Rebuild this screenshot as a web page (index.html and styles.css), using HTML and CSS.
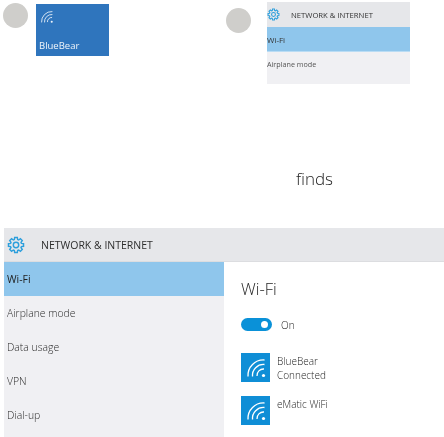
FILE: index.html
```html
<!DOCTYPE html>
<html lang="en">
<head>
<meta charset="utf-8">
<title>Network &amp; Internet</title>
<link rel="stylesheet" href="styles.css">
</head>
<body>
<svg class="defs" width="0" height="0" aria-hidden="true">
  <symbol id="gear" viewBox="0 0 20 20">
    <polygon fill="none" stroke="currentColor" stroke-width="1.6" points="16.02,8.16 18.37,8.52 18.37,11.48 16.02,11.84 15.56,12.96 16.96,14.88 14.88,16.96 12.96,15.56 11.84,16.02 11.48,18.37 8.52,18.37 8.16,16.02 7.04,15.56 5.12,16.96 3.04,14.88 4.44,12.96 3.98,11.84 1.63,11.48 1.63,8.52 3.98,8.16 4.44,7.04 3.04,5.12 5.12,3.04 7.04,4.44 8.16,3.98 8.52,1.63 11.48,1.63 11.84,3.98 12.96,4.44 14.88,3.04 16.96,5.12 15.56,7.04"/>
    <circle cx="10" cy="10" r="3" fill="none" stroke="currentColor" stroke-width="1.6"/>
  </symbol>
  <symbol id="wifi" viewBox="0 0 29 29">
    <g fill="none" stroke="currentColor" stroke-width="1.3">
      <path d="M7 23.5A15.5 15.5 0 0 1 23.5 7"/>
      <path d="M11.500 23.5A11 11 0 0 1 23.5 11.500"/>
      <path d="M16 23A6.5 6.5 0 0 1 23 16"/>
    </g>
    <circle cx="22.5" cy="22.5" r="1.6" fill="currentColor"/>
  </symbol>
</svg>
<div class="top">
  <div class="demo demo-tile">
    <div class="circle"></div>
    <div class="tile">
      <svg class="tile-wifi"><use href="#wifi"/></svg>
      <span class="tile-label">BlueBear</span>
    </div>
  </div>
  <div class="demo demo-menu">
    <div class="circle"></div>
    <div class="mini">
      <div class="mini-head">
        <svg class="mini-gear"><use href="#gear"/></svg>
        <span>NETWORK &amp; INTERNET</span>
      </div>
      <div class="mini-row mini-active">Wi-Fi</div>
      <div class="mini-row">Airplane mode</div>
    </div>
  </div>
</div>
<p class="caption">finds</p>
<section class="settings">
  <header class="head">
    <svg class="gear"><use href="#gear"/></svg>
    <span>NETWORK &amp; INTERNET</span>
  </header>
  <div class="body">
    <nav class="side">
      <div class="row active">Wi-Fi</div>
      <div class="row">Airplane mode</div>
      <div class="row">Data usage</div>
      <div class="row">VPN</div>
      <div class="row">Dial-up</div>
    </nav>
    <main class="pane">
      <h1 class="title">Wi-Fi</h1>
      <div class="switch-line">
        <span class="switch"><span class="knob"></span></span>
        <span>On</span>
      </div>
      <div class="net">
        <span class="net-icon"><svg><use href="#wifi"/></svg></span>
        <span class="net-text">BlueBear<br>Connected</span>
      </div>
      <div class="net">
        <span class="net-icon"><svg><use href="#wifi"/></svg></span>
        <span class="net-text">eMatic WiFi</span>
      </div>
    </main>
  </div>
</section>
</body>
</html>
```

FILE: styles.css
```css
* { box-sizing: border-box; }
html, body { margin: 0; padding: 0; }
body {
  width: 444px;
  height: 437px;
  overflow: hidden;
  background: #fff;
  color: #333;
  font-family: "Open Sans", "Noto Sans", sans-serif;
  font-weight: 400;
  filter: blur(0.25px);
}
.defs { display: block; height: 0; }
.top { display: flex; height: 84px; }
.demo { display: flex; align-items: flex-start; }
.circle { width: 25px; height: 25px; border-radius: 50%; background: #cfcecb; }
.demo-tile { width: 226px; padding-left: 3px; padding-top: 3px; }
.tile {
  width: 73px;
  height: 52px;
  margin: 1px 0 0 8px;
  padding: 3px 3px 5px;
  background: #2f75bd;
  color: #f0f5fa;
  display: flex;
  flex-direction: column;
  justify-content: space-between;
}
.tile-wifi { width: 19px; height: 19px; margin-left: -2px; color: #eef4fa; }
.tile-label { font-size: 9.5px; line-height: 10px; }
.demo-menu { padding-top: 2px; }
.demo-menu .circle { margin-top: 6px; }
.mini { width: 143px; height: 82px; margin-left: 16px; background: #f0f0f3; font-size: 7.2px; }
.mini-head {
  height: 25px;
  background: #e6e7ea;
  display: flex;
  align-items: center;
  gap: 11px;
  font-size: 7.7px;
  color: #333;
}
.mini-gear { width: 13px; height: 13px; color: #2d9fdc; }
.mini-row { height: 25px; line-height: 25px; color: #555; }
.mini-active { background: #8fc6ec; border-bottom: 1px solid #b9dcf4; color: #333; font-size: 8px; }
.caption { margin: 0; width: 444px; height: 144px; padding: 85px 0 0 185px; font-size: 17px; font-weight: 300; line-height: 20px; text-align: center; color: #222; }
.settings { margin-left: 4px; height: 209px; }
.head {
  height: 34px;
  background: #e6e7ea;
  border-bottom: 1px solid #dcdde0;
  display: flex;
  align-items: center;
  gap: 16px;
  padding-left: 3px;
  font-size: 10.5px;
  color: #2e2e2e;
}
.gear { width: 18px; height: 18px; color: #2d9fdc; }
.body { display: flex; }
.side { width: 220px; height: 175px; background: #f0f0f3; font-size: 10.4px; font-weight: 300; color: #2a2a2a; }
.row { height: 34px; line-height: 34px; padding-left: 3px; }
.active { background: #8fc6ec; color: #222; font-weight: 400; }
.pane { padding: 16px 0 0 17px; font-size: 10px; font-weight: 300; color: #1e1e1e; }
.title { margin: 0; font-size: 16.5px; font-weight: 300; line-height: 22px; }
.switch-line { display: flex; align-items: center; gap: 9px; margin-top: 18px; height: 13px; }
.switch { width: 31px; height: 13px; border-radius: 7px; background: #0a91d8; display: flex; align-items: center; justify-content: flex-end; padding-right: 4px; }
.knob { width: 7px; height: 7px; border-radius: 50%; background: #fff; }
.net { display: flex; gap: 7px; margin-top: 14px; height: 29px; }
.switch-line + .net { margin-top: 22px; }
.net-icon { width: 29px; height: 29px; background: #0f8ed6; color: #fff; display: block; }
.net-icon svg { display: block; width: 29px; height: 29px; }
.net-text { line-height: 14px; padding-top: 1px; }
```
